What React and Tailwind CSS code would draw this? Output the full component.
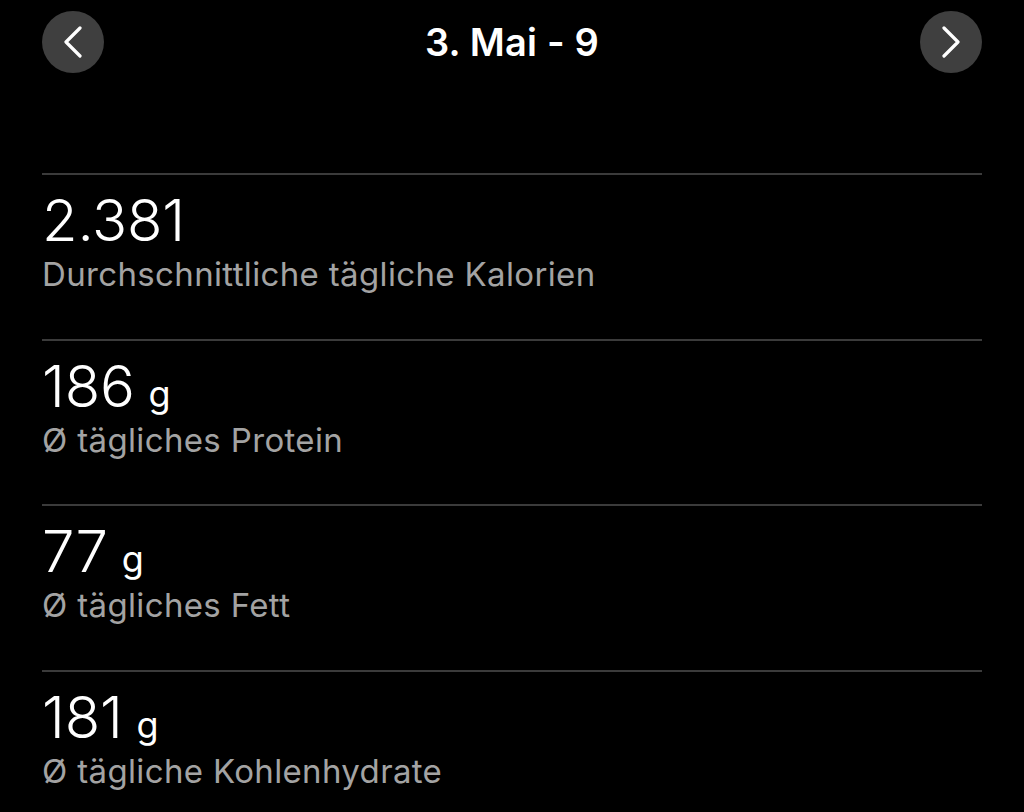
import React from "react";

const stats = [
  { value: "2.381", unit: null, label: "Durchschnittliche tägliche Kalorien" },
  { value: "186", unit: "g", label: "Ø tägliches Protein" },
  { value: "77", unit: "g", label: "Ø tägliches Fett" },
  { value: "181", unit: "g", label: "Ø tägliche Kohlenhydrate" },
];

function Chevron({ dir }) {
  const d = dir === "left" ? "M17 2 L3 16 L17 30" : "M3 2 L17 16 L3 30";
  return (
    <svg width="20" height="32" viewBox="0 0 20 32" fill="none">
      <path d={d} stroke="white" strokeWidth="3.2" strokeLinecap="round" strokeLinejoin="round" />
    </svg>
  );
}

function NavButton({ dir }) {
  return (
    <button className="flex h-[62px] w-[62px] items-center justify-center rounded-full bg-[#3f3f3f]">
      <Chevron dir={dir} />
    </button>
  );
}

export default function App() {
  return (
    <div
      className="min-h-[812px] w-[1024px] overflow-hidden bg-black px-[42px] pt-[11px] text-white"
      style={{ fontFamily: "Inter, 'Noto Sans', sans-serif" }}
    >
      <header className="flex items-center justify-between">
        <NavButton dir="left" />
        <h1 className="text-[38px] font-semibold leading-none tracking-[0.2px]">3. Mai - 9</h1>
        <NavButton dir="right" />
      </header>

      <div className="mt-[100px]">
        {stats.map((s) => (
          <section key={s.label} className="h-[165.5px] border-t-2 border-[#3b3b3b] pt-[10px]">
            <div className="flex items-baseline leading-[1.21]">
              <span className="text-[58px] font-light tracking-[-0.2px]">{s.value}</span>
              {s.unit && <span className="ml-[14px] text-[36px] font-normal">{s.unit}</span>}
            </div>
            <div className="text-[33px] leading-[1.21] tracking-[0.35px] text-[#a3a3a3]">{s.label}</div>
          </section>
        ))}
      </div>
    </div>
  );
}
